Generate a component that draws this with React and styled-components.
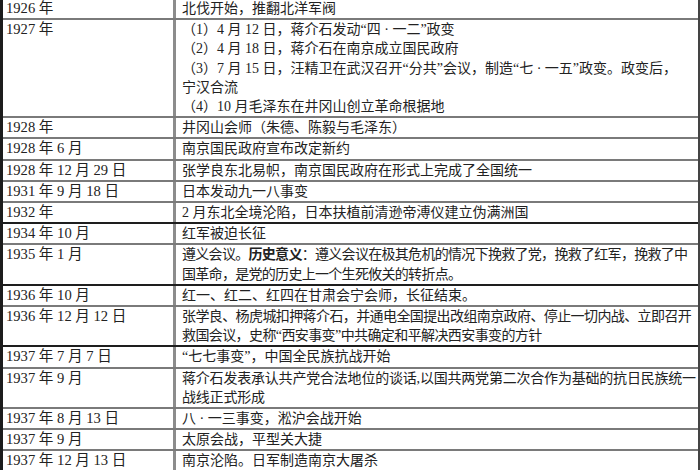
import styled, { createGlobalStyle } from 'styled-components';

const GlobalStyle = createGlobalStyle`
	html, body {
		margin: 0;
		padding: 0;
		background: #fff;
	}
	body {
		width: 700px;
		height: 470px;
		overflow: hidden;
	}
`;

const Table = styled.div`
	margin-top: -1px;
	width: 700px;
	box-sizing: border-box;
	border-left: 3px solid #1c1c1c;
	border-right: 2px solid #444;
	font-family: "Liberation Serif", "Noto Sans CJK SC", serif;
	font-size: 14px;
	color: #222;
`;

const Row = styled.div`
	display: grid;
	grid-template-columns: 173px 1fr;
	border-bottom: 2px solid ${p => (p.$strong ? '#1e1e1e' : '#7a7a7a')};
`;

const DateCell = styled.div`
	padding-left: 3px;
	border-right: 3px solid #8c8c8c;
	font-size: 14.6px;
	line-height: 19.2px;
	white-space: nowrap;
`;

const EventCell = styled.div`
	padding-left: 6px;
	overflow: hidden;
`;

const Line = styled.div`
	line-height: 19.2px;
	white-space: nowrap;
	letter-spacing: ${p => p.$squeeze || 0}px;

	b {
		font-weight: bold;
	}
`;

const rows = [
	{ date: '1926 年', lines: ['北伐开始，推翻北洋军阀'] },
	{
		date: '1927 年',
		lines: [
			'（1）4 月 12 日，蒋介石发动“四 · 一二”政变',
			'（2）4 月 18 日，蒋介石在南京成立国民政府',
			'（3）7 月 15 日，汪精卫在武汉召开“分共”会议，制造“七 · 一五”政变。政变后，',
			'宁汉合流',
			'（4）10 月毛泽东在井冈山创立革命根据地',
		],
	},
	{ date: '1928 年', lines: ['井冈山会师（朱德、陈毅与毛泽东）'] },
	{ date: '1928 年 6 月', lines: ['南京国民政府宣布改定新约'] },
	{ date: '1928 年 12 月 29 日', lines: ['张学良东北易帜，南京国民政府在形式上完成了全国统一'] },
	{ date: '1931 年 9 月 18 日', lines: ['日本发动九一八事变'] },
	{ date: '1932 年', lines: ['2 月东北全境沦陷，日本扶植前清逊帝溥仪建立伪满洲国'], strong: true },
	{ date: '1934 年 10 月', lines: ['红军被迫长征'] },
	{
		date: '1935 年 1 月',
		lines: [
			<>遵义会议。<b>历史意义</b>：遵义会议在极其危机的情况下挽救了党，挽救了红军，挽救了中</>,
			'国革命，是党的历史上一个生死攸关的转折点。',
		],
		squeeze: -0.7,
		strong: true,
	},
	{ date: '1936 年 10 月', lines: ['红一、红二、红四在甘肃会宁会师，长征结束。'] },
	{
		date: '1936 年 12 月 12 日',
		lines: [
			'张学良、杨虎城扣押蒋介石，并通电全国提出改组南京政府、停止一切内战、立即召开',
			'救国会议，史称“西安事变”中共确定和平解决西安事变的方针',
		],
		squeeze: -0.6,
		strong: true,
	},
	{ date: '1937 年 7 月 7 日', lines: ['“七七事变”，中国全民族抗战开始'] },
	{
		date: '1937 年 9 月',
		lines: [
			'蒋介石发表承认共产党合法地位的谈话,以国共两党第二次合作为基础的抗日民族统一',
			'战线正式形成',
		],
		squeeze: -0.2,
	},
	{ date: '1937 年 8 月 13 日', lines: ['八 · 一三事变，淞沪会战开始'] },
	{ date: '1937 年 9 月', lines: ['太原会战，平型关大捷'] },
	{ date: '1937 年 12 月 13 日', lines: ['南京沦陷。日军制造南京大屠杀'] },
];

export default function App() {
	return (
		<>
			<GlobalStyle />
			<Table>
				{rows.map((row, i) => (
					<Row key={i} $strong={row.strong}>
						<DateCell>{row.date}</DateCell>
						<EventCell>
							{row.lines.map((line, j) => (
								<Line key={j} $squeeze={row.squeeze}>{line}</Line>
							))}
						</EventCell>
					</Row>
				))}
			</Table>
		</>
	);
}
